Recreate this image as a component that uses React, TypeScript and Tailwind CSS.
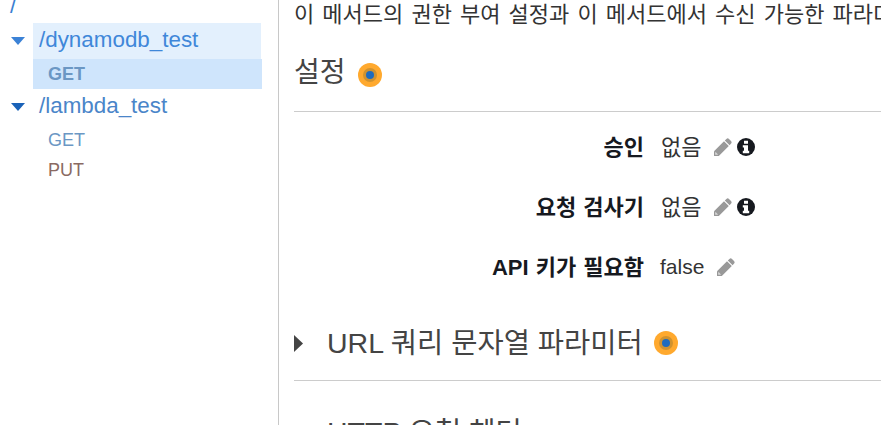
import React from "react";

const font = "font-['Liberation_Sans','Noto_Sans_CJK_KR',sans-serif]";

function Caret({ color }: { color: string }) {
  return (
    <svg width="14" height="8" viewBox="0 0 14 8" className="shrink-0">
      <path d="M0 0H14L7 8Z" fill={color} />
    </svg>
  );
}

function Dot() {
  return (
    <span className="inline-flex w-6 h-6 shrink-0 items-center justify-center rounded-full bg-[#ffa92e]">
      <span className="flex w-[14px] h-[14px] items-center justify-center rounded-full bg-[#d0922f]">
        <span className="block w-2 h-2 rounded-full bg-[#1f6bbd]" />
      </span>
    </span>
  );
}

function Pencil() {
  return (
    <svg width="19" height="19" viewBox="0 0 19 19" className="ml-3 shrink-0">
      <path d="M1 13.2L11 3.2L15.8 8L5.8 18H1Z" fill="#999" />
      <path d="M11.8 2.4L13.4 0.9Q14.8 -0.2 16 1L18 3Q19.2 4.2 18.1 5.6L16.6 7.2Z" fill="#999" />
      <path d="M2.6 14L5 16.4L4.6 16.8H2.2V14.4Z" fill="#d8d8d8" />
    </svg>
  );
}

function InfoIcon() {
  return (
    <svg width="18" height="18" viewBox="0 0 18 18" className="ml-[5px] shrink-0">
      <circle cx="9" cy="9" r="9" fill="#16191f" />
      <path d="M7 2.8H11V5.8H7ZM5.8 7.2H11V12.8H12.2V15.2H5.8V12.8H7V9.6H5.8Z" fill="#fff" />
    </svg>
  );
}

function Row({ label, value, info, latin }: { label: string; value: string; info?: boolean; latin?: boolean }) {
  return (
    <div className="flex items-center h-[30px]">
      <div className="w-[350px] text-right text-[22px] font-bold text-[#16191f] [word-spacing:1px]">{label}</div>
      <div className={latin ? "flex items-center ml-4 text-[21px] text-[#333]" : "flex items-center ml-[17px] text-[22px] text-[#333]"}>
        <span>{value}</span>
        <Pencil />
        {info && <InfoIcon />}
      </div>
    </div>
  );
}

export default function App() {
  return (
    <div className={`flex h-[425px] w-[881px] overflow-hidden bg-white ${font}`}>
      <aside className="w-[279px] shrink-0 border-r border-[#c8c8c8]">
        <div className="-mt-[8px] pl-[10px] h-[31px] text-[22.4px] leading-[27px] text-[#3b7fd1]">/</div>
        <div className="flex">
          <div className="w-[33px] pl-[11px] pt-[14px]">
            <Caret color="#3b82d6" />
          </div>
          <div className="w-[229px]">
            <div className="h-9 w-[228px] bg-[#e3f0fd] pl-[6px] text-[22.4px] leading-[34px] text-[#3f87d9]">/dynamodb_test</div>
            <div className="h-[30px] bg-[#cfe5fc] pl-[15px] text-[18px] font-bold leading-[31px] text-[#6b97c4]">GET</div>
          </div>
        </div>
        <div className="flex mt-px">
          <div className="w-[33px] pl-[11px] pt-[13px]">
            <Caret color="#1a62b8" />
          </div>
          <div className="w-[229px]">
            <div className="h-[34px] pl-[6px] text-[22.4px] leading-[32px] text-[#4a85c9]">/lambda_test</div>
            <div className="h-[30px] pl-[15px] text-[18px] leading-[32px] text-[#6b97c4]">GET</div>
            <div className="h-[30px] pl-[15px] text-[18px] leading-[32px] text-[#8a6a62]">PUT</div>
          </div>
        </div>
      </aside>
      <main className="flex-1 min-w-0 pl-[15px] overflow-hidden">
        <p className="h-[32px] -mt-[1px] whitespace-nowrap text-[22px] leading-[32px] text-[#333] [word-spacing:2px]">
          이 메서드의 권한 부여 설정과 이 메서드에서 수신 가능한 파라미터에 대한 정보를 제공합니다.
        </p>
        <div className="mt-[17px] flex items-center gap-3 h-[50px] text-[28px] text-[#444]">
          <span>설정</span>
          <span className="flex mt-1"><Dot /></span>
        </div>
        <div className="mt-[13px] border-t border-[#ccc]" />
        <div className="mt-5 flex flex-col gap-[30px]">
          <Row label="승인" value="없음" info />
          <Row label="요청 검사기" value="없음" info />
          <Row label="API 키가 필요함" value="false" latin />
        </div>
        <div className="mt-[41px] flex items-center h-10 text-[28.5px] text-[#444]">
          <svg width="9" height="17" viewBox="0 0 9 17" className="shrink-0">
            <path d="M0 0L9 8.5L0 17Z" fill="#444" />
          </svg>
          <span className="ml-6">URL 쿼리 문자열 파라미터</span>
          <span className="ml-[11px] flex"><Dot /></span>
        </div>
        <div className="mt-[17px] border-t border-[#ccc]" />
        <div className="mt-[31px] pl-[33px] text-[28.5px] leading-[40px] text-[#444]">HTTP 요청 헤더</div>
      </main>
    </div>
  );
}
